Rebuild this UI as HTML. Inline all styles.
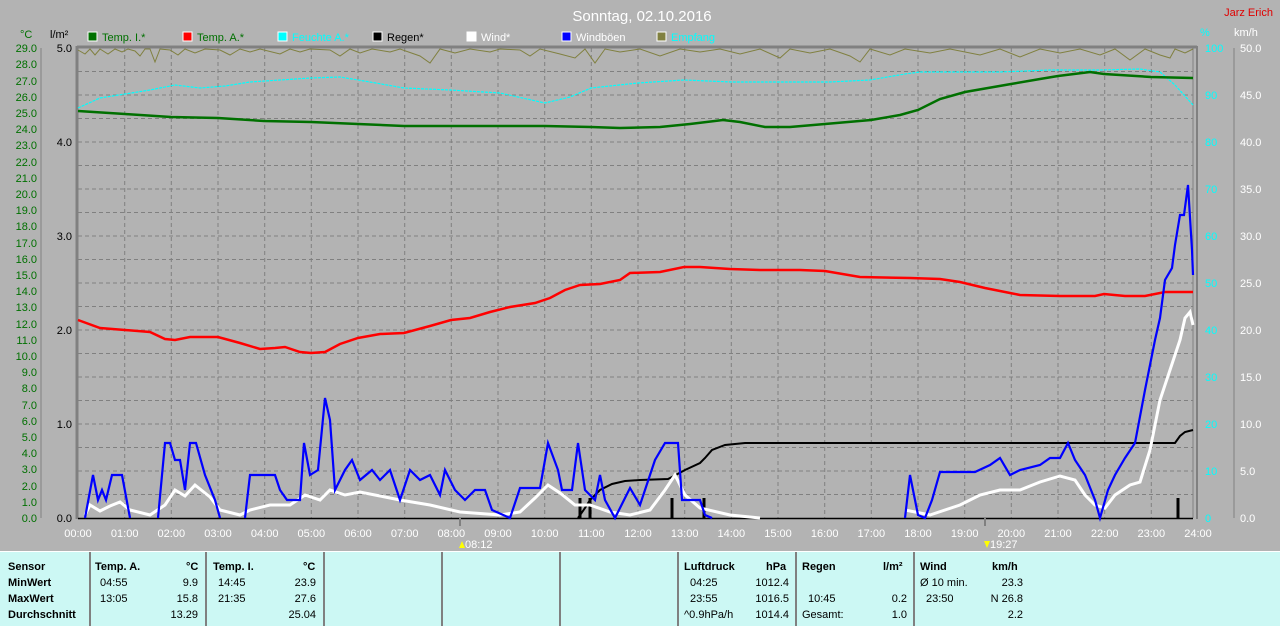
<!DOCTYPE html>
<html><head><meta charset="utf-8"><style>
body{margin:0;width:1280px;height:625px;overflow:hidden;background:#b3b3b3;font-family:"Liberation Sans",sans-serif}
svg{position:absolute;left:0;top:0}
svg text{font-family:"Liberation Sans",sans-serif;font-size:11px}
#tbl{position:absolute;left:0;top:551px;width:1280px;height:74px;background:#ccf8f4;border-top:1px solid #fff}
.c{position:absolute;top:0;height:74px;border-left:2px solid #808080}
.t{position:absolute;font-size:11px;color:#000;white-space:nowrap}
.b{font-weight:bold}
</style></head><body>
<svg width="1280" height="552" viewBox="0 0 1280 552">
<text x="642" y="21" fill="#fff" font-size="15" text-anchor="middle" style="font-size:15px">Sonntag, 02.10.2016</text>
<text x="1273" y="16" fill="#e00000" text-anchor="end">Jarz Erich</text>
<text x="20" y="38" fill="#007000">°C</text>
<text x="50" y="38" fill="#000">l/m²</text>
<rect x="88" y="32" width="9" height="9" fill="#007000" stroke="#fff"/><text x="102" y="41" fill="#007000">Temp. I.*</text>
<rect x="183" y="32" width="9" height="9" fill="#f00" stroke="#fff"/><text x="197" y="41" fill="#007000">Temp. A.*</text>
<rect x="278" y="32" width="9" height="9" fill="#0ff" stroke="#fff"/><text x="292" y="41" fill="#0ff">Feuchte A.*</text>
<rect x="373" y="32" width="9" height="9" fill="#000" stroke="#fff"/><text x="387" y="41" fill="#000">Regen*</text>
<rect x="467" y="32" width="9" height="9" fill="#fff" stroke="#fff"/><text x="481" y="41" fill="#fff">Wind*</text>
<rect x="562" y="32" width="9" height="9" fill="#00f" stroke="#fff"/><text x="576" y="41" fill="#fff">Windböen</text>
<rect x="657" y="32" width="9" height="9" fill="#808040" stroke="#fff"/><text x="671" y="41" fill="#0ff">Empfang</text>
<text x="1200" y="36" fill="#0ff">%</text>
<text x="1234" y="36" fill="#fff">km/h</text>
<!-- grid -->
<g stroke="#808080" stroke-dasharray="4,3" stroke-width="1">
<line x1="78" x2="1193" y1="71.5" y2="71.5"/><line x1="78" x2="1193" y1="95" y2="95"/><line x1="78" x2="1193" y1="118.5" y2="118.5"/><line x1="78" x2="1193" y1="142" y2="142"/><line x1="78" x2="1193" y1="165.5" y2="165.5"/><line x1="78" x2="1193" y1="189" y2="189"/><line x1="78" x2="1193" y1="212.5" y2="212.5"/><line x1="78" x2="1193" y1="236" y2="236"/><line x1="78" x2="1193" y1="259.5" y2="259.5"/><line x1="78" x2="1193" y1="283" y2="283"/><line x1="78" x2="1193" y1="306.5" y2="306.5"/><line x1="78" x2="1193" y1="330" y2="330"/><line x1="78" x2="1193" y1="353.5" y2="353.5"/><line x1="78" x2="1193" y1="377" y2="377"/><line x1="78" x2="1193" y1="400.5" y2="400.5"/><line x1="78" x2="1193" y1="424" y2="424"/><line x1="78" x2="1193" y1="447.5" y2="447.5"/><line x1="78" x2="1193" y1="471" y2="471"/><line x1="78" x2="1193" y1="494.5" y2="494.5"/>
<line y1="48" y2="518" x1="124.7" x2="124.7"/><line y1="48" y2="518" x1="171.3" x2="171.3"/><line y1="48" y2="518" x1="218" x2="218"/><line y1="48" y2="518" x1="264.7" x2="264.7"/><line y1="48" y2="518" x1="311.3" x2="311.3"/><line y1="48" y2="518" x1="358" x2="358"/><line y1="48" y2="518" x1="404.7" x2="404.7"/><line y1="48" y2="518" x1="451.3" x2="451.3"/><line y1="48" y2="518" x1="498" x2="498"/><line y1="48" y2="518" x1="544.7" x2="544.7"/><line y1="48" y2="518" x1="591.3" x2="591.3"/><line y1="48" y2="518" x1="638" x2="638"/><line y1="48" y2="518" x1="684.7" x2="684.7"/><line y1="48" y2="518" x1="731.3" x2="731.3"/><line y1="48" y2="518" x1="778" x2="778"/><line y1="48" y2="518" x1="824.7" x2="824.7"/><line y1="48" y2="518" x1="871.3" x2="871.3"/><line y1="48" y2="518" x1="918" x2="918"/><line y1="48" y2="518" x1="964.7" x2="964.7"/><line y1="48" y2="518" x1="1011.3" x2="1011.3"/><line y1="48" y2="518" x1="1058" x2="1058"/><line y1="48" y2="518" x1="1104.7" x2="1104.7"/><line y1="48" y2="518" x1="1151.3" x2="1151.3"/>
</g>
<!-- frame -->
<line x1="77" y1="47" x2="1197" y2="47" stroke="#808080" stroke-width="3"/>
<line x1="77" y1="46" x2="77" y2="519" stroke="#808080" stroke-width="3"/>
<line x1="1193" y1="48" x2="1193" y2="518" stroke="#808080"/>
<line x1="1197" y1="46" x2="1197" y2="519" stroke="#808080" stroke-width="2"/>
<line x1="78" y1="518.5" x2="1193" y2="518.5" stroke="#000" stroke-width="1.5"/>
<line x1="41" y1="48" x2="41" y2="518" stroke="#808080"/>
<line x1="1234" y1="48" x2="1234" y2="518" stroke="#808080"/>
<!-- emfang -->
<polyline fill="none" stroke="#808040" stroke-width="1" points="78,50 85,54 90,49 95,55 100,49 108,54 115,49 122,52 128,49 135,51 140,56 145,49 150,49 155,62 160,49 170,50 178,55 185,49 195,53 205,49 220,50 230,55 240,49 250,52 260,49 280,54 290,49 300,52 310,49 330,50 340,56 350,49 360,53 372,49 390,52 400,49 420,56 430,63 440,49 455,53 470,49 490,52 500,49 520,50 530,56 540,49 560,54 575,58 585,49 595,63 605,49 620,52 640,49 660,56 680,49 700,52 720,49 740,54 760,49 780,58 790,49 810,53 830,49 850,56 860,62 870,49 890,55 905,49 930,53 950,49 980,55 1000,49 1020,57 1040,49 1060,53 1080,49 1100,55 1115,49 1130,60 1145,49 1160,55 1170,58 1175,49 1185,53 1193,49"/>
<!-- humidity -->
<polyline fill="none" stroke="#00ffff" stroke-width="1.2" stroke-dasharray="3,1" points="78,108 100,98 125,94 150,90 175,85 200,88 225,86 250,82 280,80 311,78 340,77 370,82 404,88 450,90 500,93 545,103 570,97 591,88 638,83 684,80 731,82 780,82 830,82 870,80 905,74 920,72 1000,72 1050,70 1100,70 1140,69 1160,72 1175,85 1193,105"/>
<!-- temp I -->
<polyline fill="none" stroke="#007000" stroke-width="2.5" points="78,111 125,114 171,117 218,118 264,121 311,122 358,124 404,126 451,126 498,126 545,126 591,127 620,128 660,127 690,124 723,120 740,122 765,127 790,127 825,124 871,120 900,115 918,110 940,99 965,92 1011,84 1040,79 1058,76 1090,72 1104,74 1151,77 1193,78"/>
<!-- temp A -->
<polyline fill="none" stroke="#f00" stroke-width="2.5" points="78,320 100,328 125,330 150,332 165,339 175,340 190,337 218,337 240,343 260,349 275,348 285,347 300,352 311,353 325,352 340,344 358,338 380,334 404,333 430,326 451,320 470,318 490,312 510,307 535,303 550,298 565,290 580,285 600,284 620,280 630,273 660,272 684,267 700,267 730,269 760,270 800,270 825,271 860,277 910,278 940,279 960,282 985,288 1010,293 1020,295 1060,296 1095,296 1104,294 1125,296 1145,296 1165,292 1193,292"/>
<!-- rain bars -->
<g stroke="#000" stroke-width="3"><line x1="580" y1="518" x2="580" y2="498"/><line x1="590" y1="518" x2="590" y2="498"/><line x1="672" y1="518" x2="672" y2="498"/><line x1="704" y1="518" x2="704" y2="498"/><line x1="1178" y1="518" x2="1178" y2="498"/></g>
<!-- rain cumulative -->
<polyline fill="none" stroke="#000" stroke-width="2" points="578,518 585,508 590,500 600,490 612,484 625,481 640,480 668,479 672,477 685,470 700,463 705,458 712,450 725,445 745,443 800,443 1175,443 1180,436 1185,432 1193,430"/>
<!-- wind white -->
<polyline fill="none" stroke="#fff" stroke-width="3" points="85,515 90,505 100,511 110,506 120,502 130,510 150,515 165,505 175,490 185,496 195,485 210,497 220,510 240,515 250,510 270,505 290,505 305,495 320,500 330,490 345,495 360,492 380,496 400,500 430,505 460,512 500,515 520,512 535,498 548,485 560,493 575,505 590,505 610,512 630,515 650,510 665,490 675,475 685,495 700,508 730,515 760,518"/>
<polyline fill="none" stroke="#fff" stroke-width="3" points="905,510 930,515 960,505 980,495 1000,490 1020,490 1040,482 1060,476 1075,480 1085,495 1095,505 1105,508 1115,495 1130,485 1140,482 1150,450 1160,400 1170,370 1180,340 1185,318 1190,312 1193,325"/>
<!-- gusts blue -->
<polyline fill="none" stroke="#00f" stroke-width="2.2" points="85,518 93,475 98,500 102,490 106,500 112,475 122,475 130,518"/>
<polyline fill="none" stroke="#00f" stroke-width="2.2" points="158,518 165,443 170,443 175,460 180,460 185,490 190,443 196,443 205,475 215,500 220,518"/>
<polyline fill="none" stroke="#00f" stroke-width="2.2" points="245,518 250,475 275,475 280,490 287,500 300,500 304,443 310,475 318,470 325,398 330,420 335,490 345,470 352,460 360,480 372,470 380,480 390,470 400,500 410,470 420,480 430,475 440,495 445,470 455,490 465,500 475,490 485,490 492,510 510,518 520,488 540,488 548,443 558,470 562,490 572,490 578,443 585,490 595,500 600,475 605,500 615,518 630,488 640,505 655,460 665,443 678,443 682,500 700,500 705,515 712,518"/>
<polyline fill="none" stroke="#00f" stroke-width="2.2" points="905,518 910,475 918,515 925,518 932,500 940,472 975,472 990,465 1000,458 1010,475 1020,470 1040,465 1050,458 1060,458 1068,443 1075,460 1085,475 1095,500 1100,518 1108,490 1115,475 1125,458 1135,443 1145,390 1155,340 1160,318 1165,280 1172,268 1175,245 1180,215 1184,215 1188,185 1192,250 1193,275"/>
<!-- left labels C -->
<g fill="#007000" text-anchor="end">
<text x="37" y="522">0.0</text><text x="37" y="506">1.0</text><text x="37" y="490">2.0</text><text x="37" y="473">3.0</text><text x="37" y="457">4.0</text><text x="37" y="441">5.0</text><text x="37" y="425">6.0</text><text x="37" y="409">7.0</text><text x="37" y="392">8.0</text><text x="37" y="376">9.0</text><text x="37" y="360">10.0</text><text x="37" y="344">11.0</text><text x="37" y="328">12.0</text><text x="37" y="311">13.0</text><text x="37" y="295">14.0</text><text x="37" y="279">15.0</text><text x="37" y="263">16.0</text><text x="37" y="247">17.0</text><text x="37" y="230">18.0</text><text x="37" y="214">19.0</text><text x="37" y="198">20.0</text><text x="37" y="182">21.0</text><text x="37" y="166">22.0</text><text x="37" y="149">23.0</text><text x="37" y="133">24.0</text><text x="37" y="117">25.0</text><text x="37" y="101">26.0</text><text x="37" y="85">27.0</text><text x="37" y="68">28.0</text><text x="37" y="52">29.0</text>
</g>
<g fill="#000" text-anchor="end"><text x="72" y="522">0.0</text><text x="72" y="428">1.0</text><text x="72" y="334">2.0</text><text x="72" y="240">3.0</text><text x="72" y="146">4.0</text><text x="72" y="52">5.0</text></g>
<g fill="#0ff"><text x="1205" y="52">100</text><text x="1205" y="99">90</text><text x="1205" y="146">80</text><text x="1205" y="193">70</text><text x="1205" y="240">60</text><text x="1205" y="287">50</text><text x="1205" y="334">40</text><text x="1205" y="381">30</text><text x="1205" y="428">20</text><text x="1205" y="475">10</text><text x="1205" y="522">0</text></g>
<g fill="#fff"><text x="1240" y="52">50.0</text><text x="1240" y="99">45.0</text><text x="1240" y="146">40.0</text><text x="1240" y="193">35.0</text><text x="1240" y="240">30.0</text><text x="1240" y="287">25.0</text><text x="1240" y="334">20.0</text><text x="1240" y="381">15.0</text><text x="1240" y="428">10.0</text><text x="1240" y="475">5.0</text><text x="1240" y="522">0.0</text></g>
<g fill="#fff" text-anchor="middle"><text x="78" y="537">00:00</text><text x="124.7" y="537">01:00</text><text x="171.3" y="537">02:00</text><text x="218" y="537">03:00</text><text x="264.7" y="537">04:00</text><text x="311.3" y="537">05:00</text><text x="358" y="537">06:00</text><text x="404.7" y="537">07:00</text><text x="451.3" y="537">08:00</text><text x="498" y="537">09:00</text><text x="544.7" y="537">10:00</text><text x="591.3" y="537">11:00</text><text x="638" y="537">12:00</text><text x="684.7" y="537">13:00</text><text x="731.3" y="537">14:00</text><text x="778" y="537">15:00</text><text x="824.7" y="537">16:00</text><text x="871.3" y="537">17:00</text><text x="918" y="537">18:00</text><text x="964.7" y="537">19:00</text><text x="1011.3" y="537">20:00</text><text x="1058" y="537">21:00</text><text x="1104.7" y="537">22:00</text><text x="1151.3" y="537">23:00</text><text x="1198" y="537">24:00</text></g>
<line x1="460" y1="518" x2="460" y2="526" stroke="#808080" stroke-width="2"/>
<line x1="985" y1="518" x2="985" y2="526" stroke="#808080" stroke-width="2"/>
<polygon points="459,548 462,541 465,548" fill="#ff0"/><text x="465" y="548" fill="#fff">08:12</text>
<polygon points="984,541 987,548 990,541" fill="#ff0"/><text x="990" y="548" fill="#fff">19:27</text>
</svg>
<div id="tbl">
<div class="c" style="left:89px"></div><div class="c" style="left:205px"></div><div class="c" style="left:323px"></div><div class="c" style="left:441px"></div><div class="c" style="left:559px"></div><div class="c" style="left:677px"></div><div class="c" style="left:795px"></div><div class="c" style="left:913px"></div>
<div class="t b" style="left:8px;top:9px">Sensor</div><div class="t b" style="left:8px;top:25px">MinWert</div><div class="t b" style="left:8px;top:41px">MaxWert</div><div class="t b" style="left:8px;top:57px">Durchschnitt</div>
<div class="t b" style="left:95px;top:9px">Temp. A.</div><div class="t b" style="left:186px;top:9px">°C</div>
<div class="t" style="left:100px;top:25px">04:55</div><div class="t" style="right:1082px;top:25px">9.9</div>
<div class="t" style="left:100px;top:41px">13:05</div><div class="t" style="right:1082px;top:41px">15.8</div>
<div class="t" style="right:1082px;top:57px">13.29</div>
<div class="t b" style="left:213px;top:9px">Temp. I.</div><div class="t b" style="left:303px;top:9px">°C</div>
<div class="t" style="left:218px;top:25px">14:45</div><div class="t" style="right:964px;top:25px">23.9</div>
<div class="t" style="left:218px;top:41px">21:35</div><div class="t" style="right:964px;top:41px">27.6</div>
<div class="t" style="right:964px;top:57px">25.04</div>
<div class="t b" style="left:684px;top:9px">Luftdruck</div><div class="t b" style="left:766px;top:9px">hPa</div>
<div class="t" style="left:690px;top:25px">04:25</div><div class="t" style="right:491px;top:25px">1012.4</div>
<div class="t" style="left:690px;top:41px">23:55</div><div class="t" style="right:491px;top:41px">1016.5</div>
<div class="t" style="left:684px;top:57px">^0.9hPa/h</div><div class="t" style="right:491px;top:57px">1014.4</div>
<div class="t b" style="left:802px;top:9px">Regen</div><div class="t b" style="left:883px;top:9px">l/m²</div>
<div class="t" style="left:808px;top:41px">10:45</div><div class="t" style="right:373px;top:41px">0.2</div>
<div class="t" style="left:802px;top:57px">Gesamt:</div><div class="t" style="right:373px;top:57px">1.0</div>
<div class="t b" style="left:920px;top:9px">Wind</div><div class="t b" style="left:992px;top:9px">km/h</div>
<div class="t" style="left:920px;top:25px">Ø 10 min.</div><div class="t" style="right:257px;top:25px">23.3</div>
<div class="t" style="left:926px;top:41px">23:50</div><div class="t" style="right:257px;top:41px">N 26.8</div>
<div class="t" style="right:257px;top:57px">2.2</div>
</div>
</body></html>
